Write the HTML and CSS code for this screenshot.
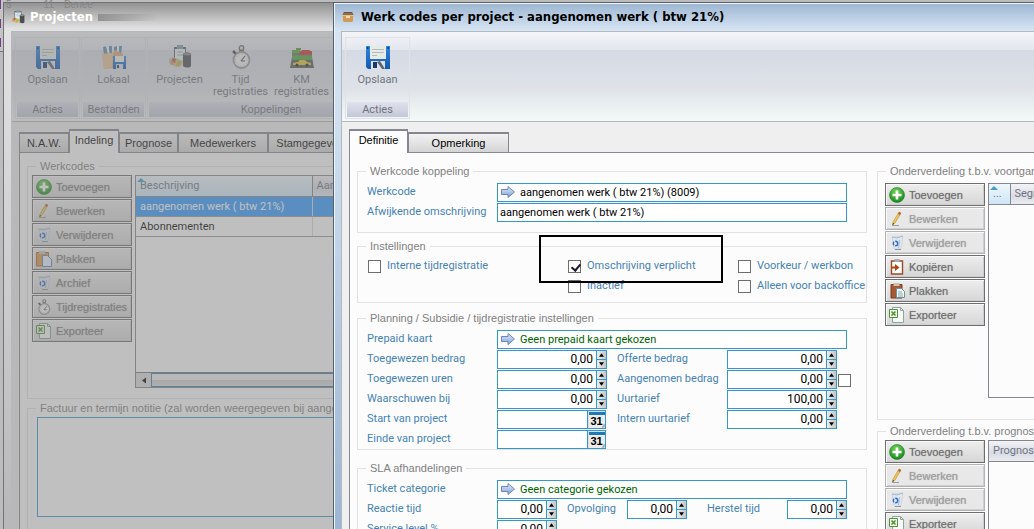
FILE: index.html
```
<!DOCTYPE html>
<html lang="nl">
<head>
<meta charset="utf-8">
<meta name="viewport" content="width=device-width, initial-scale=1">
<title>Werk codes per project</title>
<link rel="stylesheet" href="styles.css">
</head>
<body>
<svg class="sprites" aria-hidden="true">
  <defs>
    <linearGradient id="gBlue" x1="0" y1="0" x2="0" y2="1"><stop offset="0" stop-color="#2f86dd"/><stop offset="1" stop-color="#1458b0"/></linearGradient>
    <linearGradient id="gArrow" x1="0" y1="0" x2="0" y2="1"><stop offset="0" stop-color="#e4edfb"/><stop offset="1" stop-color="#7f9fd8"/></linearGradient>
    <radialGradient id="gGreen" cx=".45" cy=".3" r=".7"><stop offset="0" stop-color="#7ad35e"/><stop offset="1" stop-color="#138a1c"/></radialGradient>
    <symbol id="floppy" viewBox="0 0 24 24">
      <path d="M0 1h24v23H2l-2-2z" fill="url(#gBlue)"/><path d="M4 1h16v13H4z" fill="#e6ebe8"/><path d="M6 4.500h12M6 7.500h12M6 10.500h5" stroke="#b4bdba"/><path d="M5 16h14v8H5z" fill="#dfe2e6"/><path d="M7 17h4v6H7z" fill="#173b70"/><path d="M11 17l5 7h3l-5-8z" fill="#5c6470"/><path d="M1 2h1.500v2H1zM21.500 2H23v2h-1.500z" fill="#0c3a80"/>
    </symbol>
    <symbol id="folder" viewBox="0 0 24 24">
      <path d="M1 2l4-1 2 9H2zM7 1h3v9H7zM12 2l3-1 1 9h-4zM17 1h3l-1 9h-3z" fill="#5d8cb4"/><path d="M4 1h2l2 9H6zM15 1h2v8h-2z" fill="#f2f2ea"/><path d="M0 9l11-1 2-3 8 4-2 13-17 2z" fill="#d6a877"/><path d="M0 9l11-1-1 14-8 2z" fill="#e7c399"/><path d="M11 11h13v13H11z" fill="url(#gBlue)"/><path d="M13 11h9v6h-9z" fill="#eef1ec"/><path d="M14 19h7v5h-7z" fill="#d5d9e0"/><path d="M15 20h2v3h-2z" fill="#173b70"/>
    </symbol>
    <symbol id="project" viewBox="0 0 24 24">
      <path d="M6 2h12v14H6z" fill="#56677a"/><path d="M7 4h10v12H7z" fill="#e6ecef"/><path d="M9 0h6v4H9z" fill="#8298a8"/><path d="M9 7h6M9 10h6" stroke="#9fa8af"/><path d="M15 9c1-2 7-2 8 0v12c-1 2-6 2-8 0z" fill="#4c4f50"/><path d="M15 9c1-2 7-2 8 0-1 2-7 2-8 0z" fill="#868a8c"/><path d="M1 14l4-2 10 4-2 5-5 1-7-4z" fill="#b5c78b"/><path d="M5 13l3 1-1 4-4-1z" fill="#c85547"/><path d="M10 16l3 1-2 5-3-2z" fill="#d8a53c"/><circle cx="4" cy="18" r="2" fill="#df927a"/>
    </symbol>
    <symbol id="watch" viewBox="0 0 24 24">
      <path d="M10 3h5v5h-5z" fill="#888"/><circle cx="12.500" cy="3" r="2.300" fill="#ddd" stroke="#666" stroke-width="1.200"/><path d="M4 6l3 3" stroke="#444" stroke-width="2.500"/><circle cx="12.500" cy="15" r="8" fill="#f3f3f3" stroke="#999" stroke-width="1.800"/><circle cx="12.500" cy="15" r="5.800" fill="none" stroke="#bcbcbc" stroke-dasharray="1 2"/><path d="M16 11l-4 5M12 16h4" stroke="#555" stroke-width="1.200"/>
    </symbol>
    <symbol id="cars" viewBox="0 0 24 24">
      <path d="M2 12h20l2 11H0z" fill="#505d58"/><path d="M2 6h20v9H2z" fill="#6b7570"/><path d="M2 5h8v3H2z" fill="#5ba53b"/><path d="M10 7l2-2h7l3 2v3H9z" fill="#c73531"/><path d="M6 3h5v2H6z" fill="#4b9c32"/><path d="M2 12.500h20" stroke="#4daa36" stroke-width="4"/><path d="M3 18l5-1 2-2h5l2 2 4 1v2H3z" fill="#e6c72e"/><circle cx="7" cy="20" r="1.500" fill="#222"/><circle cx="17" cy="20" r="1.500" fill="#222"/>
    </symbol>
    <symbol id="box" viewBox="0 0 12 12">
      <path d="M2 1h8l2 4H0z" fill="#6e5138"/><path d="M2 2h8l1 2H1z" fill="#8d6e50"/><path d="M0 4h12v2H0z" fill="#e4c089"/><path d="M1 5h10v5l-1 1H2l-1-1z" fill="#d09a57"/><path d="M4 5h4v2H4z" fill="#edd9b6"/>
    </symbol>
    <symbol id="plus" viewBox="0 0 16 16">
      <circle cx="8" cy="8" r="7.500" fill="url(#gGreen)" stroke="#1c7a22" stroke-width=".6"/><path d="M8 3.500v9M3.500 8h9" stroke="#fff" stroke-width="2.600"/>
    </symbol>
    <symbol id="pencil" viewBox="0 0 16 16">
      <path d="M10 1l2 1-6 10-2.500 2 .5-3z" fill="#efc84b" stroke="#b0903f" stroke-width=".6"/><path d="M10 1l2 1-1 2-2-1z" fill="#b55a4c"/><path d="M3 14.500h7" stroke="#9a9a9a"/><path d="M3.500 14l.5-2 1.200.8z" fill="#333"/>
    </symbol>
    <symbol id="bin" viewBox="0 0 16 16">
      <path d="M3 2l11-1-2 13H5z" fill="#dfe7ef" stroke="#c4ced9" stroke-width=".7"/><path d="M3 2l5 1 6-2M10.500 5l-1 8" fill="none" stroke="#a9bacd"/><circle cx="6.500" cy="8.500" r="2.200" fill="none" stroke="#2f6bc8" stroke-width="1.400" stroke-dasharray="3.500 1"/><path d="M6 14.500h6" stroke="#8b98a5"/>
    </symbol>
    <symbol id="copy" viewBox="0 0 16 16">
      <path d="M2.500 2h11v13h-11z" fill="#fdfdfd" stroke="#9a4a27" stroke-width="1.400"/><path d="M5.500 0h5v3h-5z" fill="#a9aeb4"/><path d="M2 7.500h4V5l4.500 3.500L6 12V9.500H2z" fill="#a84a16"/>
    </symbol>
    <symbol id="paste" viewBox="0 0 16 16">
      <path d="M2 1.500h11v13.500H2z" fill="#a65a33" stroke="#7c3b1b"/><path d="M4.500 0h6v3h-6z" fill="#c7c1ba"/><path d="M7.500 5.500h5l3 3v6h-8z" fill="#f3f8f9" stroke="#6f9298"/><path d="M9 9h4M9 11h5M9 13h5" stroke="#89a8ad"/>
    </symbol>
    <symbol id="pasteLight" viewBox="0 0 16 16">
      <path d="M.5 1.500h12v13.500h-12z" fill="#d8964b" stroke="#a86c2d"/><path d="M3 0h6v3H3z" fill="#c7c1ba"/><path d="M6.500 4.500h5l4 4v7h-9z" fill="#e9f1fb" stroke="#5b84c4"/>
    </symbol>
    <symbol id="excel" viewBox="0 0 16 16">
      <path d="M3.500 .5h8l3 3v12h-11z" fill="#f7faf7" stroke="#8aa79a"/><path d="M11.500.5v3h3" fill="none" stroke="#8aa79a"/><path d="M.5 2.500h8v8h-8z" fill="#eef7e6" stroke="#55913f"/><path d="M2.500 4.500l4 4M6.500 4.500l-4 4" stroke="#4d8f36" stroke-width="1.500"/>
    </symbol>
    <symbol id="arrow" viewBox="0 0 14 12">
      <path d="M.5 3.500h6.500V.5l6.500 5.500L7 11.500V8.500H.5z" fill="url(#gArrow)" stroke="#6b87b8"/>
    </symbol>
    <symbol id="calendar" viewBox="0 0 16 16">
      <path d="M0 0h16v16H0z" fill="#ececec"/><path d="M0 0h16v3H0z" fill="#2278b5"/><path d="M13 15h2v-3" fill="none" stroke="#888"/>
    </symbol>
    <symbol id="up" viewBox="0 0 6 4"><path d="M3 0l3 4H0z"/></symbol>
    <symbol id="down" viewBox="0 0 6 4"><path d="M3 4l3-4H0z"/></symbol>
  </defs>
</svg>

<div class="desktop">
  <div class="edge" aria-hidden="true"><i></i><i></i><i></i></div>

  <section class="window window-back" aria-label="Projecten">
    <div class="ghost" aria-hidden="true"><span>5</span><span>11</span><span>Benee</span></div>
    <header class="titlebar">
      <svg class="icon16"><use href="#project"/></svg>
      <h1>Projecten</h1><span class="smear"></span>
    </header>
    <div class="panel">
      <div class="ribbon">
        <div class="ribbon-group"><div class="ribbon-items"><button class="tool"><svg><use href="#floppy"/></svg>Opslaan</button></div><div class="ribbon-label">Acties</div></div>
        <div class="ribbon-group"><div class="ribbon-items"><button class="tool"><svg><use href="#folder"/></svg>Lokaal</button></div><div class="ribbon-label">Bestanden</div></div>
        <div class="ribbon-group ribbon-wide"><div class="ribbon-items"><button class="tool"><svg><use href="#project"/></svg>Projecten</button><button class="tool"><svg><use href="#watch"/></svg>Tijd<br>registraties</button><button class="tool"><svg><use href="#cars"/></svg>KM<br>registraties</button></div><div class="ribbon-label">Koppelingen</div></div>
      </div>
      <nav class="tabs">
        <button class="tab tab-50">N.A.W.</button><button class="tab tab-50 active">Indeling</button><button class="tab tab-60">Prognose</button><button class="tab tab-90">Medewerkers</button><button class="tab tab-90">Stamgegevens</button>
      </nav>
      <div class="page page-back">
        <fieldset class="group side">
          <legend>Werkcodes</legend>
          <div class="split">
            <div class="actions">
              <button class="action"><svg><use href="#plus"/></svg>Toevoegen</button>
              <button class="action"><svg><use href="#pencil"/></svg>Bewerken</button>
              <button class="action"><svg><use href="#bin"/></svg>Verwijderen</button>
              <button class="action"><svg><use href="#pasteLight"/></svg>Plakken</button>
              <button class="action"><svg><use href="#bin"/></svg>Archief</button>
              <button class="action"><svg><use href="#watch"/></svg>Tijdregistraties</button>
              <button class="action"><svg><use href="#excel"/></svg>Exporteer</button>
            </div>
            <div class="list list-codes">
              <table>
                <thead><tr><th class="sorted col-desc">Beschrijving</th><th>Aantal</th></tr></thead>
                <tbody><tr class="selected"><td>aangenomen werk ( btw 21%)</td><td></td></tr><tr><td>Abonnementen</td><td></td></tr></tbody>
              </table>
              <div class="scroll"><button aria-label="Naar links"><svg viewBox="0 0 4 6"><path d="M4 0v6L0 3z"/></svg></button><span></span></div>
            </div>
          </div>
        </fieldset>
        <fieldset class="group note">
          <legend><label for="note">Factuur en termijn notitie (zal worden weergegeven bij aangemaakt</label></legend>
          <textarea id="note"></textarea>
        </fieldset>
      </div>
    </div>
  </section>

  <section class="window window-front" aria-label="Werk codes per project">
    <header class="titlebar">
      <svg class="icon12"><use href="#box"/></svg>
      <h1>Werk codes per project - aangenomen werk ( btw 21%)</h1>
    </header>
    <div class="panel">
      <div class="ribbon">
        <div class="ribbon-group"><div class="ribbon-items"><button class="tool"><svg><use href="#floppy"/></svg>Opslaan</button></div><div class="ribbon-label">Acties</div></div>
      </div>
      <nav class="tabs">
        <button class="tab tab-60 active">Definitie</button><button class="tab tab-100">Opmerking</button>
      </nav>
      <div class="page page-front">
        <div class="main">
          <fieldset class="group group-link">
            <legend>Werkcode koppeling</legend>
            <div class="form">
              <label for="code" class="start">Werkcode</label>
              <div class="field wide"><svg><use href="#arrow"/></svg><input id="code" value="aangenomen werk ( btw 21%) (8009)"></div>
              <label for="alt" class="start">Afwijkende omschrijving</label>
              <div class="field wide"><input id="alt" value="aangenomen werk ( btw 21%)"></div>
            </div>
          </fieldset>

          <fieldset class="group group-options">
            <legend>Instellingen</legend>
            <div class="checks">
              <label><input type="checkbox">Interne tijdregistratie</label>
              <label><input type="checkbox" checked>Omschrijving verplicht</label>
              <label><input type="checkbox">Voorkeur / werkbon</label>
              <label class="second"><input type="checkbox">Inactief</label>
              <label><input type="checkbox">Alleen voor backoffice</label>
            </div>
            <div class="marker" aria-hidden="true"></div>
          </fieldset>

          <fieldset class="group group-plan">
            <legend>Planning / Subsidie / tijdregistratie instellingen</legend>
            <div class="form">
              <label for="prepaid" class="start">Prepaid kaart</label>
              <div class="field wide chosen"><svg><use href="#arrow"/></svg><input id="prepaid" value="Geen prepaid kaart gekozen"></div>

              <label for="bedrag" class="start">Toegewezen bedrag</label>
              <div class="field num"><input id="bedrag" value="0,00"><span class="spin"><button aria-label="Meer"><svg><use href="#up"/></svg></button><button aria-label="Minder"><svg><use href="#down"/></svg></button></span></div>
              <label for="offerte">Offerte bedrag</label>
              <div class="field num"><input id="offerte" value="0,00"><span class="spin"><button aria-label="Meer"><svg><use href="#up"/></svg></button><button aria-label="Minder"><svg><use href="#down"/></svg></button></span></div>

              <label for="uren" class="start">Toegewezen uren</label>
              <div class="field num"><input id="uren" value="0,00"><span class="spin"><button aria-label="Meer"><svg><use href="#up"/></svg></button><button aria-label="Minder"><svg><use href="#down"/></svg></button></span></div>
              <label for="aangenomen">Aangenomen bedrag</label>
              <div class="field num"><input id="aangenomen" value="0,00"><span class="spin"><button aria-label="Meer"><svg><use href="#up"/></svg></button><button aria-label="Minder"><svg><use href="#down"/></svg></button></span></div>
              <input type="checkbox" aria-label="Aangenomen">

              <label for="waarschuw" class="start">Waarschuwen bij</label>
              <div class="field num"><input id="waarschuw" value="0,00"><span class="spin"><button aria-label="Meer"><svg><use href="#up"/></svg></button><button aria-label="Minder"><svg><use href="#down"/></svg></button></span></div>
              <label for="uurtarief">Uurtarief</label>
              <div class="field num"><input id="uurtarief" value="100,00"><span class="spin"><button aria-label="Meer"><svg><use href="#up"/></svg></button><button aria-label="Minder"><svg><use href="#down"/></svg></button></span></div>

              <label for="start" class="start">Start van project</label>
              <div class="field date"><input id="start"><button aria-label="Kies datum"><svg><use href="#calendar"/></svg><b>31</b></button></div>
              <label for="intern">Intern uurtarief</label>
              <div class="field num"><input id="intern" value="0,00"><span class="spin"><button aria-label="Meer"><svg><use href="#up"/></svg></button><button aria-label="Minder"><svg><use href="#down"/></svg></button></span></div>

              <label for="einde" class="start">Einde van project</label>
              <div class="field date"><input id="einde"><button aria-label="Kies datum"><svg><use href="#calendar"/></svg><b>31</b></button></div>
            </div>
          </fieldset>

          <fieldset class="group">
            <legend>SLA afhandelingen</legend>
            <div class="form form-sla">
              <label for="ticket" class="start">Ticket categorie</label>
              <div class="field wide chosen"><svg><use href="#arrow"/></svg><input id="ticket" value="Geen categorie gekozen"></div>
              <label for="reactie" class="start">Reactie tijd</label>
              <div class="field num"><input id="reactie" value="0,00"><span class="spin"><button aria-label="Meer"><svg><use href="#up"/></svg></button><button aria-label="Minder"><svg><use href="#down"/></svg></button></span></div>
              <label for="opvolging">Opvolging</label>
              <div class="field num"><input id="opvolging" value="0,00"><span class="spin"><button aria-label="Meer"><svg><use href="#up"/></svg></button><button aria-label="Minder"><svg><use href="#down"/></svg></button></span></div>
              <label for="herstel" class="indent">Herstel tijd</label>
              <div class="field num"><input id="herstel" value="0,00"><span class="spin"><button aria-label="Meer"><svg><use href="#up"/></svg></button><button aria-label="Minder"><svg><use href="#down"/></svg></button></span></div>
              <label for="service" class="start">Service level %</label>
              <div class="field num"><input id="service" value="0,00"><span class="spin"><button aria-label="Meer"><svg><use href="#up"/></svg></button><button aria-label="Minder"><svg><use href="#down"/></svg></button></span></div>
            </div>
          </fieldset>
        </div>

        <div class="aside">
          <fieldset class="group side">
            <legend>Onderverdeling t.b.v. voortgang</legend>
            <div class="split">
              <div class="actions">
                <button class="action"><svg><use href="#plus"/></svg>Toevoegen</button>
                <button class="action" disabled><svg><use href="#pencil"/></svg>Bewerken</button>
                <button class="action" disabled><svg><use href="#bin"/></svg>Verwijderen</button>
                <button class="action"><svg><use href="#copy"/></svg>Kopiëren</button>
                <button class="action"><svg><use href="#paste"/></svg>Plakken</button>
                <button class="action"><svg><use href="#excel"/></svg>Exporteer</button>
              </div>
              <div class="list list-segments">
                <table><thead><tr><th class="sorted col-dots">...</th><th>Segment</th></tr></thead></table>
              </div>
            </div>
          </fieldset>
          <fieldset class="group side side-last">
            <legend>Onderverdeling t.b.v. prognose</legend>
            <div class="split">
              <div class="actions">
                <button class="action"><svg><use href="#plus"/></svg>Toevoegen</button>
                <button class="action" disabled><svg><use href="#pencil"/></svg>Bewerken</button>
                <button class="action" disabled><svg><use href="#bin"/></svg>Verwijderen</button>
                <button class="action"><svg><use href="#excel"/></svg>Exporteer</button>
              </div>
              <div class="list list-segments">
                <table><thead><tr><th>Prognose</th></tr></thead></table>
              </div>
            </div>
          </fieldset>
        </div>
      </div>
    </div>
  </section>
</div>
</body>
</html>
```
FILE: styles.css
```
:root {
  --ui: Roboto, "Noto Sans", sans-serif;
  --arial: "Liberation Sans", Arial, sans-serif;
  --label: #4682b4;
  --line: #3399cc;
  --frame: #85868f;
}

* { box-sizing: border-box; }

body {
  margin: 0;
  font: 11px/16px var(--arial);
  color: #000;
}

button, input, textarea { font: inherit; color: inherit; margin: 0; }
button { padding: 0; border: 0; background: none; }
.sprites { position: absolute; width: 0; height: 0; }

.desktop {
  position: relative;
  height: 100vh;
  overflow: hidden;
  background: #bcbcbc;
}

.edge { width: 3px; height: 52px; background: #c4c4c4; border-bottom: 1px solid #777; }
.edge i { display: block; width: 1px; height: 9px; margin-bottom: 10px; background: #7a3a80; }

/* Windows */
.window {
  position: absolute;
  top: 2px;
  bottom: -40px;
  display: flex;
  flex-direction: column;
  padding-left: 7px;
  border: 1px solid #6f7276;
  border-right: 0;
}
.window-back {
  left: 3px;
  right: 640px;
  background: linear-gradient(#929292, #e2e2e2 26px, #dcdcdc 100px, #b4b4b4);
}
.window-front {
  left: 333px;
  right: 0;
  border-color: #55606c;
  box-shadow: inset 1px 1px 0 #eef5fc;
  background: linear-gradient(#9db6d2, #d7e5f3 28px, #cbdcee 150px, #97b1d0);
}

.ghost {
  position: absolute;
  top: -4px;
  left: 2px;
  display: flex;
  gap: 32px;
  font: 10px/12px var(--arial);
  color: #868686;
}
.ghost span + span + span { margin-left: -22px; }

.titlebar {
  display: flex;
  align-items: center;
  height: 28px;
  flex: none;
  gap: 7px;
}
.titlebar h1 {
  margin: 0;
  font: bold 13px/16px "DejaVu Sans Condensed", "DejaVu Sans", sans-serif;
  white-space: nowrap;
}
.window-back h1 { color: #fff; }
.window-back .titlebar { gap: 5px; position: relative; }
.window-front .titlebar { padding-left: 1px; }
.icon16 { width: 14px; height: 14px; }
.icon12 { width: 12px; height: 12px; }
.smear { width: 60px; height: 7px; background: linear-gradient(90deg, #929292, transparent); }

.panel {
  position: relative;
  flex: 1;
  min-height: 0;
  overflow: hidden;
  display: flex;
  flex-direction: column;
  background: #efefef;
  border: 1px solid #b4b8bf;
  border-right: 0;
}
.window-back .panel::after {
  content: "";
  position: absolute;
  inset: 0;
  background: rgba(130, 130, 130, .5);
}

/* Ribbon */
.ribbon {
  display: flex;
  gap: 1px;
  flex: none;
  height: 90px;
  padding: 5px 3px 2px;
  border-bottom: 1px solid #b4b8bf;
  background: linear-gradient(#f4f5f9, #e3e6ee 18px, #d6dae5 18px, #dee2e8 55px, #f4faf8);
}
.ribbon-group {
  display: flex;
  flex-direction: column;
  width: 65px;
  flex: none;
  padding: 1px;
  border: 1px solid #e0e2e7;
}
.ribbon-wide { width: 248px; }
.ribbon-items { display: flex; flex: 1; }
.tool {
  display: flex;
  flex-direction: column;
  align-items: center;
  width: 61px;
  padding-top: 6px;
  font: 11px/12px var(--ui);
  color: #70747c;
}
.tool svg { width: 24px; height: 24px; margin-bottom: 5px; }
.ribbon-label {
  height: 15px;
  font: 11px/15px var(--ui);
  text-align: center;
  color: #70747c;
  background: linear-gradient(#dfe1ee, #c4c8d6);
}

/* Tabs */
.tabs {
  display: flex;
  align-items: flex-end;
  flex: none;
  height: 30px;
  padding: 6px 0 0 7px;
}
.tab {
  flex: none;
  height: 20px;
  border: 2px solid var(--frame);
  border-width: 2px 1px 0;
  background: linear-gradient(#f2f2f2, #d4d4d4);
  font: 11px/17px var(--arial);
}
.tab.active {
  position: relative;
  height: 24px;
  margin-bottom: -1px;
  padding-bottom: 3px;
  background: #fcfcfc;
}
.tab-50 { width: 50px; }
.tab-60 { width: 59px; }
.tab-90 { width: 90px; }
.tab-100 { width: 101px; }

.page {
  flex: 1;
  min-height: 0;
  margin-left: 7px;
  border: 1px solid var(--frame);
  border-right: 0;
  background: #fcfcfc;
  padding: 10px 0 0 7px;
}
.page-back { padding-top: 5px; }
.page-front { display: flex; gap: 10px; }
.main { flex: none; width: 510px; }
.aside { flex: 1; min-width: 0; }

/* Group boxes */
.group {
  min-width: 0;
  margin: 0;
  padding: 4px 9px;
  border: 1px solid #e2e2e2;
}
.group legend {
  margin-left: -1px;
  padding: 0 4px;
  line-height: 16px;
  white-space: nowrap;
  color: #7f7f7f;
}
.group-link { padding-bottom: 10px; margin-bottom: 5px; }
.group-options { position: relative; padding-top: 2px; padding-bottom: 6px; margin-bottom: 7px; }
.group-plan { padding-bottom: 0; margin-bottom: 10px; }
.side { padding: 4px 0 21px 7px; border-right: 0; }
.side legend { margin-left: 1px; }
.page-back .side { padding: 1px 0 10px 4px; margin-bottom: 1px; }
.page-back .side legend { margin-left: 4px; }
.aside .side { margin-bottom: 3px; }
.aside .side-last { padding-top: 1px; }

/* Form rows */
.form {
  display: grid;
  grid-template-columns: 130px 110px 120px 110px 1fr;
  grid-auto-rows: 19px;
  row-gap: 1px;
}
.form label { padding-left: 10px; font: 11px/18px var(--ui); color: var(--label); white-space: nowrap; }
.form .start { grid-column: 1; padding-left: 0; }
.form .indent { padding-left: 20px; }
.form-sla { grid-template-columns: 130px 60px 70px 60px 100px 60px 1fr; }

.field {
  display: flex;
  align-items: stretch;
  min-width: 0;
  border: 1px solid var(--line);
  background: #fff;
}
.field.wide { grid-column: 2 / 6; width: 350px; }
.form-sla .field.wide { grid-column: 2 / 8; }
.field > svg { flex: none; width: 14px; height: 12px; margin: 2px 0 0 3px; }
.field input {
  flex: 1;
  width: 0;
  min-width: 0;
  padding: 0 2px;
  border: 0;
  background: none;
  font: 11px/17px var(--ui);
  outline: 0;
}
.field > svg + input { padding-left: 5px; }
.chosen input { color: #006400; }
.num input { padding-right: 3px; font-size: 12px; text-align: right; }
.spin { display: grid; grid-template-rows: 1fr 1fr; gap: 1px; width: 10px; border-left: 1px solid var(--line); background: var(--line); }
.spin button { display: flex; align-items: center; justify-content: center; background: linear-gradient(90deg, #eee, #c6c6c6); }
.spin svg { width: 5px; height: 4px; }
.date { margin-right: 1px; }
.date button { display: grid; place-items: center; width: 18px; border-left: 1px solid var(--line); background: #ddd; }
.date button svg, .date button b { grid-area: 1 / 1; }
.date button svg { width: 16px; height: 16px; }
.date b { padding-top: 3px; font: bold 11px/12px var(--arial); }

input[type="checkbox"] {
  appearance: none;
  flex: none;
  width: 13px;
  height: 13px;
  border: 1px solid #6e6e6e;
  background: #fff;
}
.form > input[type="checkbox"] { margin: 4px 0 0 1px; }
input[type="checkbox"]:checked::after {
  content: "";
  display: block;
  width: 4px;
  height: 7px;
  margin: 1px 0 0 4px;
  border: solid #1c1c30;
  border-width: 0 2px 2px 0;
  transform: rotate(40deg);
}
.checks {
  display: grid;
  grid-template-columns: 200px 170px 1fr;
  grid-auto-rows: 20px;
  padding: 0 0 0 1px;
}
.checks label { display: flex; align-items: center; gap: 6px; font: 11px/16px var(--ui); color: var(--label); white-space: nowrap; }
.checks .second { grid-column: 2; }
.marker {
  position: absolute;
  left: 181px;
  top: -19px;
  width: 184px;
  height: 48px;
  border: 2px solid #000;
}

/* Lists with actions */
.split { display: flex; gap: 3px; }
.actions { display: flex; flex-direction: column; gap: 1px; width: 100px; flex: none; }
.action {
  display: flex;
  align-items: center;
  gap: 4px;
  height: 23px;
  padding: 1px 0 0 3px;
  border: 1px solid #6e6e6e;
  box-shadow: inset 1px 1px 0 #f8f8f8, inset -1px -1px 0 #cfcfcf;
  background: linear-gradient(#eeeeee, #d6d6d6);
  font: 11px/16px var(--arial);
  color: #6e6e6e;
  text-shadow: 0 0 1px #9a9a9a;
  white-space: nowrap;
}
.action svg { width: 16px; height: 16px; flex: none; }
.window-back .action { color: #808080; }
.action:disabled {
  border-color: #b2b2b2;
  background: #e8e8e8;
  color: #a2a2a2;
}
.list {
  display: flex;
  flex-direction: column;
  flex: 1;
  min-width: 0;
  overflow: hidden;
  border: 1px solid #85868f;
  border-right: 0;
}
.list-codes { height: 213px; }
.list-segments { height: 215px; }
.list table { width: 100%; border-collapse: collapse; table-layout: fixed; }
.list th {
  height: 20px;
  padding: 0 4px;
  overflow: hidden;
  border-right: 1px solid #85868f;
  border-bottom: 1px solid #85868f;
  background: linear-gradient(#f3f3f6, #d9dce6 60%, #eaebf0);
  font: 11px/19px var(--ui);
  text-align: left;
  color: #6f7480;
}
.list th:last-child { border-right: 0; }
.list th.sorted { position: relative; background: linear-gradient(#eef8fd, #cfe6f5); }
.list th.sorted::before {
  content: "";
  position: absolute;
  left: 1px;
  top: 2px;
  border: 4px solid transparent;
  border-top: 0;
  border-bottom-color: #4a9cc4;
}
.list .col-desc { width: 176px; }
.list .col-dots { width: 21px; }
.list td {
  height: 20px;
  padding: 0 4px;
  border-right: 1px solid #d6d6d6;
  border-bottom: 1px solid #999;
  font: 11px/19px var(--ui);
  white-space: nowrap;
}
.selected td { background: #3399ff; color: #fff; }
.scroll { display: flex; height: 15px; margin-top: auto; border-top: 1px solid #777; }
.scroll button { display: flex; align-items: center; justify-content: center; width: 15px; background: #ddd; }
.scroll button svg { width: 4px; height: 7px; }
.scroll span { flex: 1; border: 1px solid #3c7fb1; border-right: 0; background: linear-gradient(#eee 50%, #cfcfcf 50%, #ddd); }
.note { padding: 1px 0 60px 9px; border-right: 0; }
.note textarea {
  display: block;
  width: 100%;
  height: 100px;
  border: 1px solid var(--line);
  background: #fff;
  resize: none;
}
```
